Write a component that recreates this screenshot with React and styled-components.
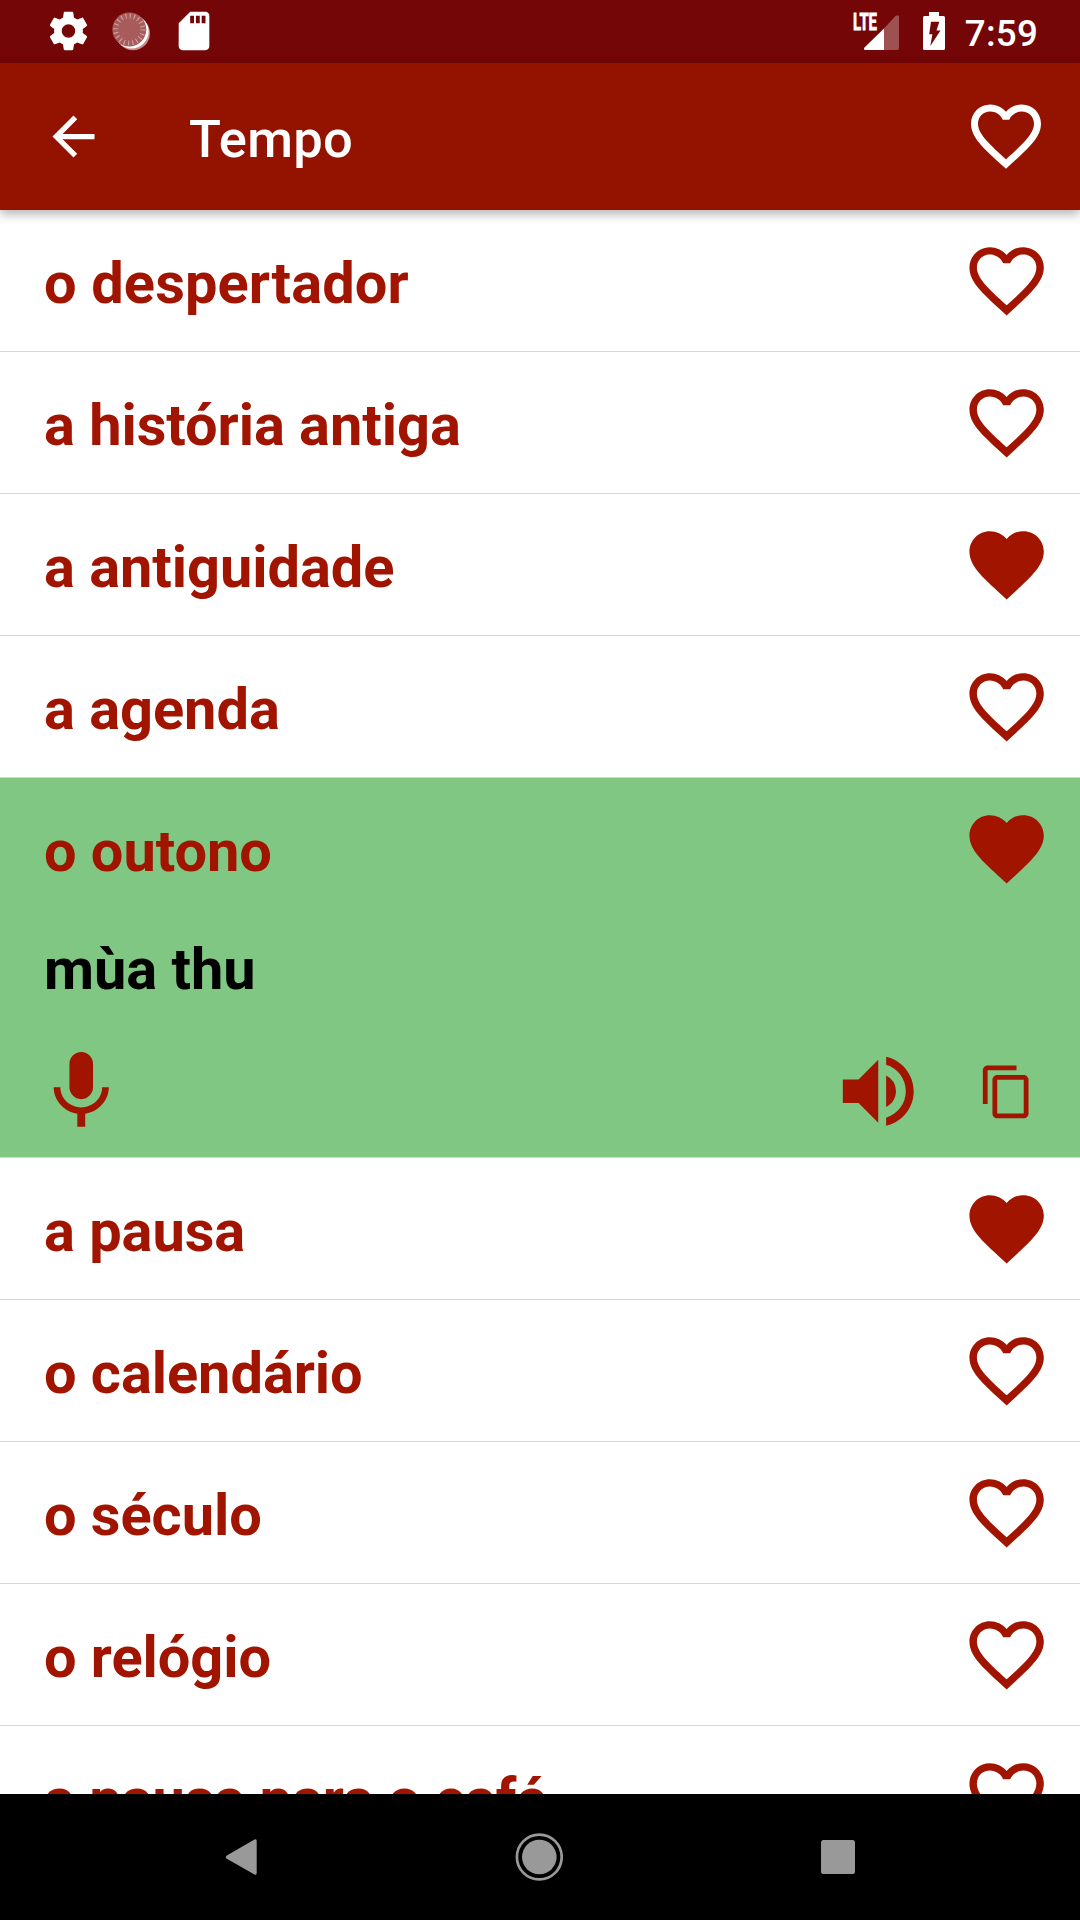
import React from "react";
import styled, { createGlobalStyle, css } from "styled-components";
import {
  MdArrowBack,
  MdContentCopy,
  MdFavorite,
  MdFavoriteBorder,
  MdSdCard,
  MdVolumeUp
} from "react-icons/md";

const red = "#a01400";
const fontStack = `Roboto, "Noto Sans", sans-serif`;

const GlobalStyle = createGlobalStyle`
  body {
    margin: 0;
    background: #fff;
    font-family: ${fontStack};
  }
  svg {
    display: block;
    flex: none;
  }
`;

const Screen = styled.div`
  display: flex;
  flex-direction: column;
  width: 1080px;
  height: 1920px;
  overflow: hidden;
`;

const StatusBar = styled.div`
  display: flex;
  flex: none;
  justify-content: space-between;
  height: 63px;
  box-sizing: border-box;
  padding: 8px 42px 0 45px;
  background: #740607;
  color: #fff;
`;

const StatusGroup = styled.div`
  display: flex;
  align-items: flex-start;
`;

const Spinner = styled.svg`
  margin: 0 17px 0 16px;
`;

const Clock = styled.div`
  font-size: 36.75px;
  font-weight: 500;
  line-height: 51px;
  letter-spacing: 0.2px;
`;

const Header = styled.header`
  display: flex;
  flex: none;
  align-items: center;
  height: 147px;
  box-sizing: border-box;
  padding: 0 32px 1px 42px;
  background: #941300;
  color: #fff;
  position: relative;
  z-index: 1;
  box-shadow: 0 4px 10px rgba(0, 0, 0, 0.3);
`;

const Title = styled.h1`
  flex: 1;
  margin: 6px 0 0 84px;
  font-size: 52.5px;
  font-weight: 500;
  line-height: 62px;
  letter-spacing: 0.25px;
`;

const List = styled.div`
  flex: 1;
  min-height: 0;
  overflow: hidden;
`;

const Item = styled.div`
  box-sizing: border-box;
  height: 142px;
  border-bottom: 1px solid #d6d6d6;
  ${props =>
    props.$open &&
    css`
      height: 380px;
      background: #81c784;
    `}
`;

const ItemTop = styled.div`
  display: flex;
  justify-content: space-between;
  height: 141px;
  box-sizing: border-box;
  padding: 25.6px 28.7px 0 44px;
  color: ${red};
`;

const Word = styled.div`
  padding-top: 13.4px;
  font-size: 57.75px;
  font-weight: 700;
  line-height: 68px;
  letter-spacing: ${props => props.$tracking || "-0.05px"};
`;

const Translation = styled(Word)`
  padding: 16px 44px 0;
  color: #000;
`;

const Actions = styled.div`
  display: flex;
  align-items: center;
  margin-top: 41px;
  padding: 0 44px 0 33.8px;
  color: ${red};
`;

const Playback = styled.div`
  display: flex;
  align-items: center;
  gap: 52.5px;
  margin-left: auto;
`;

const CopyIcon = styled(MdContentCopy)`
  margin-top: 1px;
`;

const NavBar = styled.div`
  display: grid;
  flex: none;
  grid-template-columns: repeat(3, 298.5px);
  justify-content: center;
  justify-items: center;
  align-items: center;
  height: 126px;
  box-sizing: border-box;
  padding: 0 1.4px 1px 0;
  background: #000;
`;

const words = [
  { text: "o despertador", tracking: "0.12px" },
  { text: "a história antiga" },
  { text: "a antiguidade" , liked: true },
  { text: "a agenda" },
  { text: "o outono", liked: true, translation: "mùa thu" },
  { text: "a pausa", liked: true },
  { text: "o calendário" },
  { text: "o século" },
  { text: "o relógio" },
  { text: "a pausa para o café" }
];

function GearIcon() {
  return (
    <svg width="47" height="46" viewBox="0 0 24 24" fill="currentColor">
      <path d="M19.43 12.98c.04-.32.07-.64.07-.98s-.03-.66-.07-.98l2.11-1.65c.19-.15.24-.42.12-.64l-2-3.46c-.12-.22-.39-.3-.61-.22l-2.49 1c-.52-.4-1.08-.73-1.69-.98l-.38-2.65C14.46 2.18 14.25 2 14 2h-4c-.25 0-.46.18-.49.42l-.38 2.65c-.61.25-1.17.59-1.69.98l-2.49-1c-.23-.09-.49 0-.61.22l-2 3.46c-.13.22-.07.49.12.64l2.11 1.65c-.04.32-.07.65-.07.98s.03.66.07.98l-2.11 1.65c-.19.15-.24.42-.12.64l2 3.46c.12.22.39.3.61.22l2.49-1c.52.4 1.08.73 1.69.98l.38 2.65c.03.24.24.42.49.42h4c.25 0 .46-.18.49-.42l.38-2.65c.61-.25 1.17-.59 1.69-.98l2.49 1c.23.09.49 0 .61-.22l2-3.46c.12-.22.07-.49-.12-.64l-2.11-1.65zM12 15.5c-1.93 0-3.5-1.57-3.5-3.5s1.57-3.5 3.5-3.5 3.5 1.57 3.5 3.5-1.57 3.5-3.5 3.5z" />
    </svg>
  );
}

// translucent dial over a white disc, which shows as a crescent
function SpinnerIcon() {
  return (
    <Spinner width="46" height="46" viewBox="0 0 46 46">
      <circle cx="25" cy="25.2" r="17" fill="#c58a8a" />
      <circle cx="23.6" cy="23.6" r="17" fill="#fff" />
      <circle cx="21.3" cy="21.5" r="17" fill="#a85b5b" />
      <circle
        cx="21.3"
        cy="21.5"
        r="13.6"
        fill="none"
        stroke="#cba0a0"
        strokeWidth="5"
        strokeDasharray="1.1 3.172"
      />
    </Spinner>
  );
}

function SignalIcon() {
  return (
    <svg width="48" height="46" viewBox="0 0 48 46" fill="#fff">
      <path d="M47 9v31q0 2-2 2H32V20.5L43.5 8q3.5-2 3.5 1z" opacity=".3" />
      <path d="M32 20.5V42H13.5q-2.5-.5-1-2.5z" />
      <text
        x="1"
        y="22"
        fontFamily={fontStack}
        fontSize="23"
        fontWeight="700"
        stroke="#fff"
        strokeWidth="0.8"
        textLength="24"
        lengthAdjust="spacingAndGlyphs"
      >
        LTE
      </text>
    </svg>
  );
}

function BatteryIcon() {
  return (
    <svg width="65" height="46" viewBox="0 0 65 46" fill="#fff">
      <path
        fillRule="evenodd"
        d="M29 4h10v4h4.5q1.5 0 1.5 1.5v31q0 1.5-1.5 1.5h-19q-1.5 0-1.5-1.5v-31q0-1.5 1.5-1.5H29zM31 13.800l-1.800 12.500h3.200L30.300 38l10.200-15.500h-4L39.300 13.800z"
      />
    </svg>
  );
}

function MicIcon() {
  return (
    <svg width="94.5" height="94.5" viewBox="0 0 24 24" fill="currentColor">
      <path d="M12 14c1.66 0 2.99-1.34 2.99-3L15 5c0-1.66-1.34-3-3-3S9 3.34 9 5v6c0 1.66 1.34 3 3 3zm5.3-3c0 3-2.54 5.1-5.3 5.1S6.7 14 6.7 11H5c0 3.41 2.72 6.23 6 6.72V21h2v-3.28c3.28-.48 6-3.3 6-6.72h-1.7z" />
    </svg>
  );
}

// one vocabulary row; shows translation and actions when it has one
function WordItem({ text, liked, translation, tracking }) {
  const Heart = liked ? MdFavorite : MdFavoriteBorder;
  return (
    <Item $open={!!translation}>
      <ItemTop>
        <Word $tracking={tracking}>{text}</Word>
        <Heart size={89.25} />
      </ItemTop>
      {translation && (
        <>
          <Translation>{translation}</Translation>
          <Actions>
            <MicIcon />
            <Playback>
              <MdVolumeUp size={94.5} />
              <CopyIcon size={57.75} />
            </Playback>
          </Actions>
        </>
      )}
    </Item>
  );
}

export default function App() {
  return (
    <Screen>
      <GlobalStyle />
      <StatusBar>
        <StatusGroup>
          <GearIcon />
          <SpinnerIcon />
          <MdSdCard size={46} />
        </StatusGroup>
        <StatusGroup>
          <SignalIcon />
          <BatteryIcon />
          <Clock>7:59</Clock>
        </StatusGroup>
      </StatusBar>
      <Header>
        <MdArrowBack size={63} />
        <Title>Tempo</Title>
        <MdFavoriteBorder size={84} />
      </Header>
      <List>
        {words.map(word => (
          <WordItem key={word.text} {...word} />
        ))}
      </List>
      <NavBar>
        <svg width="36" height="36" viewBox="0 0 36 36" fill="#999">
          <path d="M31.5 .6q2.2-1.2 2.2 1.4v32q0 2.6-2.2 1.4L3.8 19.8q-2-1.6 0-3.2z" />
        </svg>
        <svg width="48" height="48" viewBox="0 0 48 48">
          <circle cx="24.3" cy="24" r="22.4" fill="none" stroke="#999" strokeWidth="2.7" />
          <circle cx="24.3" cy="24" r="17.3" fill="#999" />
        </svg>
        <svg width="34" height="34" viewBox="0 0 34 34" fill="#999">
          <rect width="34" height="34" rx="2.5" />
        </svg>
      </NavBar>
    </Screen>
  );
}
